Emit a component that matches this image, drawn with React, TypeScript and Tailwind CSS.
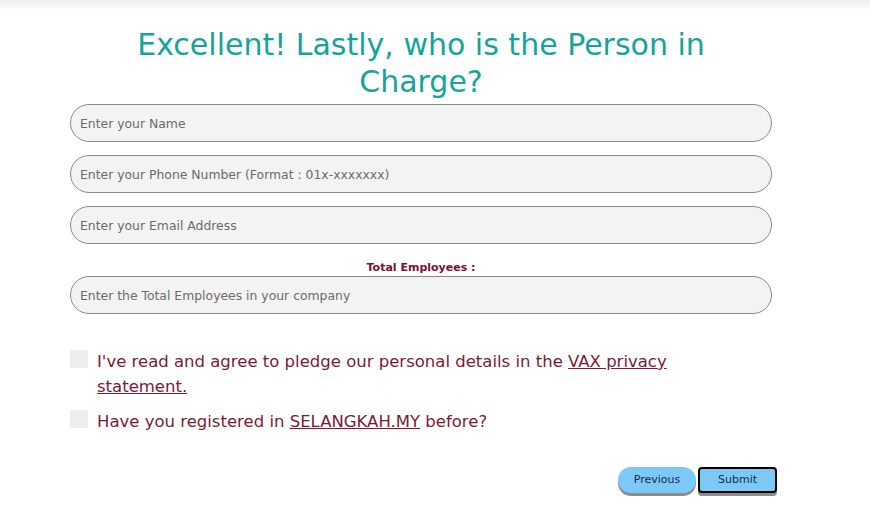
const fields = [
  'Enter your Name',
  'Enter your Phone Number (Format : 01x-xxxxxxx)',
  'Enter your Email Address',
]

const font = { fontFamily: '"DejaVu Sans", sans-serif' }

export default function App() {
  return (
    <div className="min-h-[510px] bg-white" style={font}>
      <div className="h-[10px] bg-gradient-to-b from-[#eeeeee] to-white" />
      <div className="w-[702px] ml-[70px]">
        <h1 className="mx-auto w-[620px] text-center text-[30px] leading-[37px] text-[#15a39a] mt-[16px]">
          Excellent! Lastly, who is the Person in Charge?
        </h1>

        <div className="mt-[4px] flex flex-col gap-[13px]">
          {fields.map((f) => (
            <input
              key={f}
              placeholder={f}
              className="h-[38px] w-full rounded-full border border-[#8a8a8a] bg-[#f3f3f3] px-[9px] text-[12.4px] placeholder:text-[#6b6b6b] outline-none"
            />
          ))}
        </div>

        <div className="mt-[16px] text-center text-[11px] font-bold text-[#7a0f2e] leading-[16px]">Total Employees :</div>
        <input
          placeholder="Enter the Total Employees in your company"
          className="h-[38px] w-full rounded-full border border-[#8a8a8a] bg-[#f3f3f3] px-[9px] text-[12.4px] placeholder:text-[#6b6b6b] outline-none"
        />

        <div className="mt-[35px] flex flex-col gap-[10px] text-[16.5px] leading-[25px] text-[#7b1a34]">
          <label className="flex gap-[9px]">
            <span className="mt-[1px] h-[18px] w-[18px] shrink-0 bg-[#eeeeee]" />
            <span className="w-[600px]">
              I've read and agree to pledge our personal details in the{' '}
              <a className="underline">VAX privacy statement.</a>
            </span>
          </label>
          <label className="flex gap-[9px]">
            <span className="mt-[1px] h-[18px] w-[18px] shrink-0 bg-[#eeeeee]" />
            <span>
              Have you registered in <a className="underline">SELANGKAH.MY</a> before?
            </span>
          </label>
        </div>
      </div>

      <div className="mt-[33px] flex justify-end gap-[2px] w-[777px]">
        <button className="h-[26px] w-[78px] rounded-full bg-[#7cc8f6] text-[11px] text-[#1d2b4a] shadow-[0_3px_0_#8c8c8c]">
          Previous
        </button>
        <button className="h-[26px] w-[79px] rounded-[4px] border-2 border-black bg-[#7cc8f6] text-[11px] text-[#1d2b4a] shadow-[0_3px_0_#8c8c8c]">
          Submit
        </button>
      </div>
    </div>
  )
}
